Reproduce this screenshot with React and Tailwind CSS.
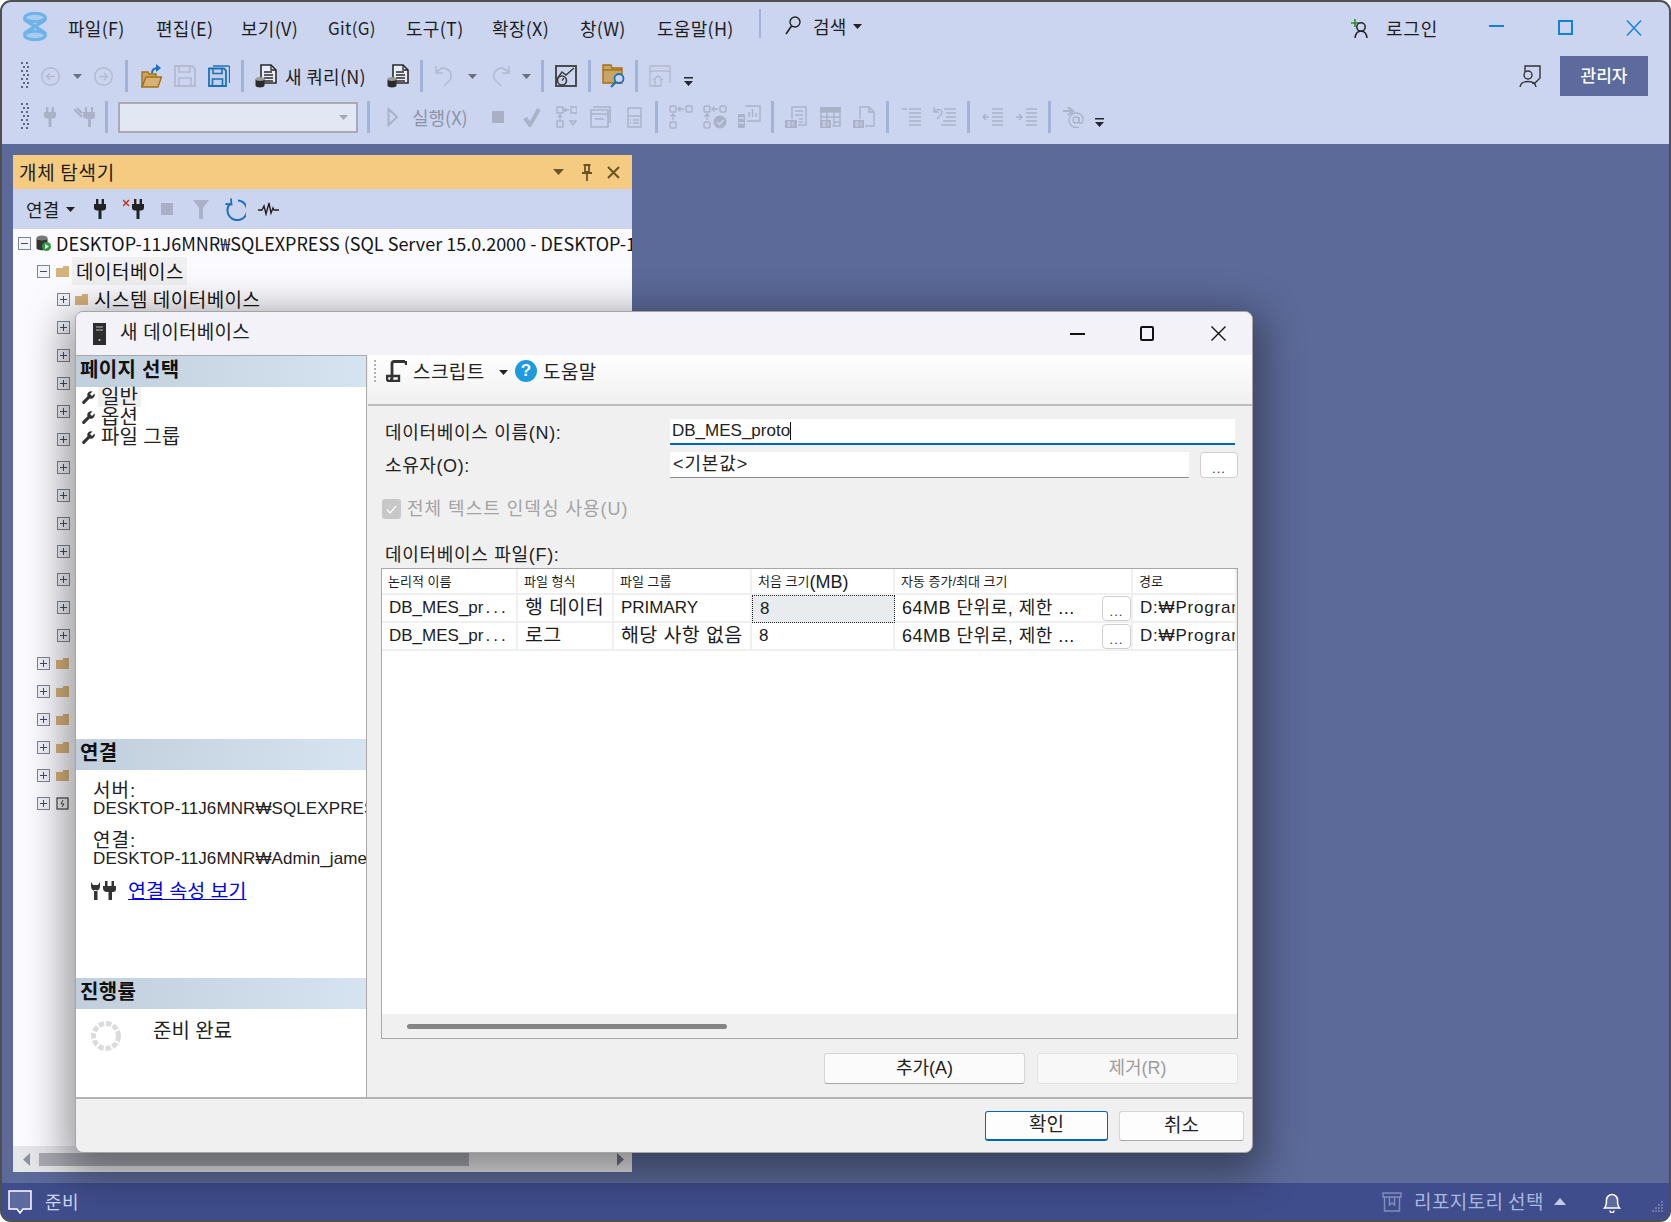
import React from "react";

const G = "#aab2c8";
const Ic = ({ w, h, className = "", children }) => (
  <svg width={w} height={h} viewBox={`0 0 ${w} ${h}`} fill="none" className={`shrink-0 ${className}`}>
    {children}
  </svg>
);
const Sep = ({ className = "" }) => <div className={`w-[3px] h-[32px] shrink-0 bg-[#a3b3d8] ${className}`} />;
const Grip = ({ className = "" }) => (
  <Ic w={8} h={28} className={className}>
    {[0, 4, 8, 12, 16, 20, 24].map((y) => (
      <g key={y} fill="#5f6680">
        <rect x={y % 8 === 0 ? 0 : 2} y={y} width="2" height="2" />
        <rect x={y % 8 === 0 ? 5 : 6} y={y} width="2" height="2" />
      </g>
    ))}
  </Ic>
);
const Arrow = ({ className = "", color = "#6b7080" }) => (
  <Ic w={9} h={5} className={className}><path d="M0 0h9L4.5 5z" fill={color} /></Ic>
);
const Overflow = ({ className = "" }) => (
  <Ic w={9} h={9} className={className}><path d="M0 0h9v1.5H0zM0 4h9L4.5 9z" fill="#22262f" /></Ic>
);
const Circ = ({ dir, className = "" }) => (
  <Ic w={19} h={19} className={className}>
    <circle cx="9.5" cy="9.5" r="8.7" stroke="#b3bace" strokeWidth="1.4" />
    {dir === "l" ? (
      <path d="M14 9.5H5.5M9 6l-3.5 3.5L9 13" stroke="#b3bace" strokeWidth="1.3" />
    ) : (
      <path d="M5 9.5h8.5M10 6l3.5 3.5L10 13" stroke="#b3bace" strokeWidth="1.3" />
    )}
  </Ic>
);
const Floppy = ({ color, className = "", all }) => (
  <Ic w={22} h={22} className={className}>
    {all && <path d="M5 1h15a1.5 1.5 0 0 1 1.5 1.5V18" stroke={color} strokeWidth="1.3" />}
    <path d={all ? "M1 3.5h15l2 2V21H1z" : "M1 1h17l3 3v17H1z"} stroke={color} strokeWidth="1.8" fill={all ? "#c3d0ea" : "none"} />
    <path d={all ? "M5 3.5v5h9v-5M4.5 21v-7h10v7" : "M5 1v6h11V1M5 21v-8h12v8"} stroke={color} strokeWidth="1.6" />
  </Ic>
);
const Query = ({ className = "" }) => (
  <Ic w={22} h={24} className={className}>
    <path d="M6 1h10l5 5v13H6z" fill="#e8ecf6" stroke="#2a2a2a" strokeWidth="1.6" />
    <path d="M16 1v5h5M9 8h8M9 11h9M9 14h9M9 17h9" stroke="#2a2a2a" strokeWidth="1.3" />
    <ellipse cx="5" cy="15" rx="4.5" ry="2" fill="#9a9a9a" />
    <path d="M.5 15v6.5c0 2.6 9 2.6 9 0V15c0 2.6-9 2.6-9 0z" fill="#2a2a2a" />
  </Ic>
);
const Plug = ({ color, className = "" }) => (
  <Ic w={12} h={20} className={className}>
    <path d="M2 0h2.4v5H2zM7.6 0H10v5H7.6zM0 5h12v3.5a3 3 0 0 1-3 3H7.5V20h-3v-8.500H3a3 3 0 0 1-3-3z" fill={color} />
  </Ic>
);
const Wrench = ({ className = "" }) => (
  <Ic w={13} h={13} className={className}>
    <path d="M12.500 2.500 10 5 8 3l2.500-2.500a3.800 3.800 0 0 0-5 4.800L.6 10.200a1.500 1.500 0 0 0 2.200 2.200l4.900-4.900a3.800 3.800 0 0 0 4.800-5z" fill="#333" />
  </Ic>
);
const Expander = ({ open, className = "" }) => (
  <div className={`w-[13px] h-[13px] shrink-0 border border-[#7d8496] bg-[#f2f3f8] relative ${className}`}>
    <div className="absolute left-[2px] right-[2px] top-[5px] h-px bg-[#3d4a70]" />
    {!open && <div className="absolute top-[2px] bottom-[2px] left-[5px] w-px bg-[#3d4a70]" />}
  </div>
);
const Folder = ({ className = "" }) => (
  <Ic w={13} h={11} className={className}><path d="M0 2h7V0h6v11H0z" fill="#d6b27c" /></Ic>
);

const Menu = () => (
  <div className="h-[54px] pb-[2px] flex items-center text-[18px] tracking-[0.3px] text-[#1e1e1e]">
    <Ic w={24} h={29} className="ml-[21px] mr-[21px] mb-[3px]">
      <ellipse cx="12" cy="5.500" rx="10.300" ry="4.200" stroke="#6db3ea" strokeWidth="3" fill="#a9cdef" />
      <ellipse cx="12" cy="23.500" rx="10.300" ry="4.200" stroke="#6db3ea" strokeWidth="3" fill="#a9cdef" />
      <path d="M2 8 22 21M22 8 2 21M2 6v3M22 6v3M2 20v3M22 20v3" stroke="#6db3ea" strokeWidth="3.400" />
    </Ic>
    <div className="w-[88px] whitespace-nowrap">파일(F)</div>
    <div className="w-[85px] whitespace-nowrap">편집(E)</div>
    <div className="w-[87px] whitespace-nowrap">보기(V)</div>
    <div className="w-[78px] whitespace-nowrap text-[17px]">Git(G)</div>
    <div className="w-[86px] whitespace-nowrap">도구(T)</div>
    <div className="w-[88px] whitespace-nowrap">확장(X)</div>
    <div className="w-[77px] whitespace-nowrap">창(W)</div>
    <div className="w-[102px] whitespace-nowrap">도움말(H)</div>
    <div className="w-[2px] h-[29px] bg-[#a3b3d8] mb-[9px]" />
    <Ic w={16} h={20} className="ml-[24px] mb-[4px]">
      <circle cx="10" cy="6" r="5" stroke="#222" strokeWidth="1.400" />
      <path d="M6.500 10 1 18" stroke="#222" strokeWidth="1.600" />
    </Ic>
    <div className="ml-[12px] whitespace-nowrap mb-[4px]">검색</div>
    <Arrow className="ml-[6px] mb-[4px]" color="#222" />
    <div className="ml-auto flex items-center">
      <Ic w={20} h={20}>
        <path d="M1 5h8M5 1v8" stroke="#2e8b2e" strokeWidth="1.600" />
        <circle cx="11" cy="9" r="4.200" stroke="#222" strokeWidth="1.500" />
        <path d="M5 20c.5-4 2.500-7 6-7s5.500 3 6 7" stroke="#222" strokeWidth="1.500" />
      </Ic>
      <div className="ml-[16px] w-[53px] whitespace-nowrap tracking-[0.8px]">로그인</div>
      <div className="ml-[50px] w-[15px] h-[2px] bg-[#0f82da] mb-[5px]" />
      <div className="ml-[54px] w-[15px] h-[15px] border-2 border-[#0f82da] mb-[1px]" />
      <Ic w={16} h={16} className="ml-[53px] mb-[1px]">
        <path d="M1 .5 15 15.500M15 .5 1 15.500" stroke="#0f82da" strokeWidth="1.400" />
      </Ic>
      <div className="w-[27px]" />
    </div>
  </div>
);

const Row1 = () => (
  <div className="h-[40px] flex items-center text-[#1e1e1e]">
    <Grip className="ml-[19px]" />
    <Circ dir="l" className="ml-[12px]" />
    <Arrow className="ml-[13px]" />
    <Circ dir="r" className="ml-[12px]" />
    <Sep className="ml-[12px]" />
    <Ic w={21} h={24} className="ml-[13px]">
      <path d="M1 8h6l1 2h7v4H5l-4 9z" fill="#c9a468" stroke="#a8700f" strokeWidth="1.400" />
      <path d="M1 23 5 13h15.500L17 23z" fill="#d4b27a" stroke="#a8700f" strokeWidth="1.400" />
      <path d="M11 9c0-3 2-5 6-5" stroke="#1c6fb8" strokeWidth="2" />
      <path d="M15 0l5 4-5 4z" fill="#1c6fb8" />
    </Ic>
    <Floppy color="#b3bace" className="ml-[12px]" />
    <Floppy color="#1c71b8" all className="ml-[12px]" />
    <Sep className="ml-[11px]" />
    <Query className="ml-[11px]" />
    <div className="ml-[8px] w-[82px] text-[18px] tracking-[0.3px] whitespace-nowrap">새 쿼리(N)</div>
    <Query className="ml-[20px]" />
    <Sep className="ml-[11px]" />
    <Ic w={20} h={22} className="ml-[12px]">
      <path d="M1 1v7h7M1 8c3-4 7-6 11-4 5 3 6 9 1 13l-4 4" stroke="#b3bace" strokeWidth="1.500" />
    </Ic>
    <Arrow className="ml-[13px]" />
    <Ic w={20} h={22} className="ml-[13px]">
      <path d="M19 1v7h-7M19 8c-3-4-7-6-11-4-5 3-6 9-1 13l4 4" stroke="#b3bace" strokeWidth="1.500" />
    </Ic>
    <Arrow className="ml-[12px]" />
    <Sep className="ml-[10px]" />
    <Ic w={22} h={22} className="ml-[11px]">
      <rect x="1" y="1" width="20" height="20" stroke="#3c3c3c" strokeWidth="1.800" />
      <path d="M2 14 7 7l4 3 8-7" stroke="#3c3c3c" strokeWidth="1.500" />
      <circle cx="7" cy="15.500" r="4.500" fill="#ccd5f0" stroke="#3c3c3c" strokeWidth="1.600" />
      <path d="M7 15.500 9 13" stroke="#3c3c3c" strokeWidth="1.300" />
    </Ic>
    <Sep className="ml-[11px]" />
    <Ic w={24} h={24} className="ml-[11px]">
      <path d="M1 1h8l1 3h10v15H1z" fill="#c9a468" stroke="#a8700f" strokeWidth="1.400" />
      <path d="M1 6h19" stroke="#a8700f" strokeWidth="1.400" />
      <circle cx="17" cy="14.500" r="4.500" fill="#ccd5f0" stroke="#1c6fb8" strokeWidth="1.800" />
      <path d="M14 18l-5 5" stroke="#1c6fb8" strokeWidth="2" />
    </Ic>
    <Sep className="ml-[9px]" />
    <Ic w={22} h={22} className="ml-[11px]">
      <path d="M11 21H1V1h20v17M1 6h20" stroke="#b3bace" strokeWidth="1.400" />
      <path d="M4 15l5-4 5 4M6 14v7h6v-7" stroke="#b3bace" strokeWidth="1.400" />
    </Ic>
    <Overflow className="ml-[13px] mt-[11px]" />
    <div className="ml-auto flex items-center">
      <Ic w={22} h={22}>
        <path d="M6 7V1h15v12l-5 5h-3" stroke="#333" strokeWidth="1.400" />
        <circle cx="9" cy="10" r="4" stroke="#333" strokeWidth="1.400" fill="#ccd5f0" />
        <path d="M1 22c.5-3.500 3-5.500 8-5.500S16.500 18.500 17 22" stroke="#333" strokeWidth="1.400" />
      </Ic>
      <div className="ml-[19px] mr-[21px] w-[88px] h-[40px] bg-[#5c6a9e] text-white text-[17px] font-medium flex items-center justify-center pb-[2px]">관리자</div>
    </div>
  </div>
);

const GBox = ({ children, w, h, className }) => <Ic w={w} h={h} className={className}>{children}</Ic>;

const Row2 = () => (
  <div className="mt-px h-[40px] flex items-center text-[#8b92a8]">
    <Grip className="ml-[19px]" />
    <Plug color={G} className="ml-[15px]" />
    <GBox w={21} h={20} className="ml-[18px]">
      <path d="M0 2 8 10M3 1l5 5" stroke={G} strokeWidth="2.400" />
      <path d="M11 0h2v5h-2zM17 0h2v5h-2zM9 5h12v4a3 3 0 0 1-3 3h-1v8h-3v-8h-1a4 4 0 0 1-4-4z" fill={G} />
    </GBox>
    <Sep className="ml-[10px]" />
    <div className="ml-[10px] w-[240px] h-[31px] bg-[#e1e7f3] border-2 border-[#a9abb0] flex items-center justify-end pr-[8px]">
      <Arrow color="#a3a8b5" />
    </div>
    <Sep className="ml-[9px]" />
    <GBox w={11} h={20} className="ml-[17px]"><path d="M1.500 2 10 10l-8.500 8z" stroke={G} strokeWidth="2" /></GBox>
    <div className="ml-[14px] w-[55px] text-[18px] whitespace-nowrap">실행(X)</div>
    <div className="ml-[25px] w-[12px] h-[12px] bg-[#a9b0c6] shrink-0" />
    <GBox w={18} h={19} className="ml-[19px]"><path d="M2 10l5 7L16 1" stroke={G} strokeWidth="4" /></GBox>
    <GBox w={21} h={22} className="ml-[15px]">
      <path d="M1 1h6v6H1zM15 1h6v6h-6zM1 15h6v6H1zM13 4H8M10 2 8 4l2 2M4 9v5M2 11l2-2 2 2M14 15h6l-3 4z" stroke={G} strokeWidth="1.300" />
    </GBox>
    <GBox w={21} h={22} className="ml-[13px]">
      <path d="M3 1h17v16M1 4h17v17H1zM1 8h17M5 13h9" stroke={G} strokeWidth="1.600" />
    </GBox>
    <GBox w={15} h={21} className="ml-[16px]">
      <path d="M1 1h13v19H1zM1 9h13M6 13h6M6 16h6M3 13h1M3 16h1" stroke={G} strokeWidth="1.400" />
    </GBox>
    <Sep className="ml-[13px]" />
    <GBox w={24} h={24} className="ml-[11px]">
      <rect x="1" y="1" width="6" height="6" rx="1.500" stroke={G} strokeWidth="1.500" />
      <rect x="17" y="1" width="6" height="6" rx="1.500" stroke={G} strokeWidth="1.500" />
      <rect x="1" y="17" width="6" height="6" rx="1.500" stroke={G} strokeWidth="1.500" />
      <path d="M15 4H9M11.500 1.500 9 4l2.500 2.500M4 15V9M1.500 11.500 4 9l2.500 2.500" stroke={G} strokeWidth="1.300" />
    </GBox>
    <GBox w={24} h={24} className="ml-[10px]">
      <rect x="1" y="1" width="6" height="6" rx="1.500" stroke={G} strokeWidth="1.500" />
      <rect x="17" y="1" width="6" height="6" rx="1.500" stroke={G} strokeWidth="1.500" />
      <rect x="1" y="17" width="6" height="6" rx="1.500" stroke={G} strokeWidth="1.500" />
      <path d="M15 4H9M11.500 1.500 9 4l2.500 2.500M4 15V9M1.500 11.500 4 9l2.500 2.500" stroke={G} strokeWidth="1.300" />
      <circle cx="17" cy="17" r="6.500" fill={G} />
      <path d="M14 17l2.500 2.500L20.500 15" stroke="#ccd5f0" strokeWidth="1.500" />
    </GBox>
    <GBox w={24} h={24} className="ml-[10px]">
      <path d="M8 1h15v15H10" stroke={G} strokeWidth="1.400" />
      <path d="M12 12V7M15.500 12V4M19 12V8" stroke={G} strokeWidth="1.400" />
      <rect x="1" y="9" width="7" height="14" rx="1" fill={G} />
      <path d="M2 13h5M2 18h5" stroke="#ccd5f0" strokeWidth="1.300" />
    </GBox>
    <Sep className="ml-[10px]" />
    <GBox w={22} h={22} className="ml-[11px]">
      <path d="M7 13V1h14v18h-8M10 5h8M10 9h8M14 13h4M14 16h4" stroke={G} strokeWidth="1.400" />
      <rect x="0" y="14" width="12" height="8" fill={G} />
      <path d="M3 16h2v4H3zM8 16v4" stroke="#ccd5f0" strokeWidth="1" />
    </GBox>
    <GBox w={21} h={22} className="ml-[13px]">
      <rect x="0" y="1" width="21" height="5" fill={G} />
      <path d="M1 6h19v14h-8M1 11h19M1 6v8M7 6v8M14 6v14M14 16h6" stroke={G} strokeWidth="1.400" />
      <rect x="0" y="14" width="11" height="8" fill={G} />
      <path d="M3 16h2v4H3zM8 16v4" stroke="#ccd5f0" strokeWidth="1" />
    </GBox>
    <GBox w={22} h={22} className="ml-[12px]">
      <path d="M7 13V1h9l5 5v14h-9M16 1v5h5" stroke={G} strokeWidth="1.400" />
      <rect x="0" y="14" width="11" height="8" fill={G} />
      <path d="M3 16h2v4H3zM8 16v4" stroke="#ccd5f0" strokeWidth="1" />
    </GBox>
    <Sep className="ml-[11px]" />
    <GBox w={19} h={19} className="ml-[13px]">
      <path d="M0 1h5M7 1h12M7 5h12M7 9h12M7 13h12M7 17h12" stroke={G} strokeWidth="1.400" />
    </GBox>
    <GBox w={23} h={22} className="ml-[12px]">
      <path d="M11 3h12M13 7h10M13 11h10M10 15h13M8 19h15" stroke={G} strokeWidth="1.400" />
      <path d="M1 1v5h5M1 6c3-4 7-3 8 0 0 3-3 4-5 7" stroke={G} strokeWidth="1.400" />
    </GBox>
    <Sep className="ml-[11px]" />
    <GBox w={21} h={19} className="ml-[12px]">
      <path d="M7 9H1M4 6 1 9l3 3M10 1h11M10 5h11M10 9h11M10 13h11M10 17h11" stroke={G} strokeWidth="1.400" />
    </GBox>
    <GBox w={22} h={19} className="ml-[12px]">
      <path d="M1 9h6M4 6l3 3-3 3M11 1h11M11 5h11M11 9h11M11 13h11M11 17h11" stroke={G} strokeWidth="1.400" />
    </GBox>
    <Sep className="ml-[11px]" />
    <GBox w={21} h={22} className="ml-[12px]">
      <path d="M0 5h8M5 1l5 4-5 4" stroke={G} strokeWidth="2" />
      <circle cx="13" cy="14" r="3" stroke={G} strokeWidth="1.300" />
      <path d="M16 11v5c0 2 4 2 4-2 0-4.500-3-7-7-7s-7 3-7 7 3 7.500 7 7.500h3" stroke={G} strokeWidth="1.300" />
    </GBox>
    <Overflow className="ml-[11px] mt-[11px]" />
  </div>
);

const TreeRow = ({ level, label, kind = "folder", hl, open }) => {
  const pad = level === 1 ? "pl-[24px]" : "pl-[44px]";
  const gap = level === 1 ? "ml-[6px]" : "ml-[5px]";
  return (
    <div className={`h-[28px] flex items-center text-[19px] tracking-[0.5px] text-[#151515] whitespace-nowrap ${pad}`}>
      <Expander open={open} />
      {kind === "folder" && <Folder className={gap} />}
      {kind === "special" && (
        <Ic w={13} h={13} className="ml-[6px]">
          <rect x="1" y="1" width="11" height="11" fill="#eee" stroke="#444" strokeWidth="1.200" />
          <path d="M7 3 5 7h3l-2 3" stroke="#444" strokeWidth="1" />
        </Ic>
      )}
      {label && (
        <div className={hl ? "ml-[3px] pl-[4px] pr-[3px] h-[28px] flex items-center bg-[#f0f0f0]" : "ml-[6px]"}>{label}</div>
      )}
    </div>
  );
};

const Panel = () => (
  <div className="ml-[11px] mt-[11px] mb-[11px] w-[619px] flex flex-col bg-[#fbfbff] overflow-hidden">
    <div className="h-[34px] bg-[#f5cb82] flex items-center pl-[6px] text-[19px] tracking-[0.7px] text-[#1e1e1e] shrink-0">
      <div className="whitespace-nowrap">개체 탐색기</div>
      <Ic w={11} h={6} className="ml-auto"><path d="M0 0h11L5.500 6z" fill="#6b5324" /></Ic>
      <Ic w={10} h={17} className="ml-[18px]">
        <path d="M1.500 1h7M3 1v7h4V1M0 9h10M5 9v8" stroke="#6b5324" strokeWidth="1.800" />
      </Ic>
      <Ic w={13} h={13} className="ml-[15px] mr-[12px]"><path d="M1 1l11 11M12 1 1 12" stroke="#6b5324" strokeWidth="2" /></Ic>
    </div>
    <div className="h-[40px] bg-[#ccd5f0] flex items-center shrink-0">
      <div className="ml-[13px] w-[36px] text-[18px] tracking-[0.3px] text-[#1e1e1e] whitespace-nowrap">연결</div>
      <Arrow className="ml-[4px]" color="#222" />
      <Plug color="#222" className="ml-[19px]" />
      <Ic w={21} h={20} className="ml-[17px]">
        <path d="M0 1l6 6M6 1 0 7" stroke="#c4331b" strokeWidth="1.500" />
        <path d="M11 0h2.400v5H11zM16.600 0H19v5h-2.400zM9 5h12v3.500a3 3 0 0 1-3 3h-1.500V20h-3v-8.500H12a3 3 0 0 1-3-3z" fill="#222" />
      </Ic>
      <div className="ml-[17px] w-[12px] h-[12px] bg-[#a9b0c6]" />
      <Ic w={16} h={21} className="ml-[20px]"><path d="M0 1h16L10 9v11H6V9z" fill={G} /></Ic>
      <Ic w={22} h={24} className="ml-[15px]">
        <path d="M6.500 6.200a9.800 9.800 0 1 0 7.500-2.700" stroke="#1c71b8" strokeWidth="2" />
        <path d="M7 1.500 7.500 7.500 1.500 7" stroke="#1c71b8" strokeWidth="1.800" />
      </Ic>
      <Ic w={21} h={14} className="ml-[12px]">
        <path d="M0 8h4l2-4 2 8 3-11 2 10 2-5 1 2h5" stroke="#222" strokeWidth="1.400" />
      </Ic>
    </div>
    <div className="flex-1 min-h-0">
      <div className="h-[28px] flex items-center pl-[5px] text-[18px] text-[#151515] whitespace-nowrap overflow-hidden">
        <Expander open />
        <Ic w={15} h={16} className="ml-[5px]">
          <ellipse cx="6" cy="3" rx="5.500" ry="2.500" fill="#777" />
          <path d="M.5 3v10c0 3 11 3 11 0V3c0 3-11 3-11 0z" fill="#333" />
          <circle cx="10.500" cy="11.500" r="4.500" fill="#2b9a3a" />
          <path d="M9 9l4 2.500L9 14z" fill="#fff" />
        </Ic>
        <div className="ml-[5px]">DESKTOP-11J6MNR₩SQLEXPRESS (SQL Server 15.0.2000 - DESKTOP-11J6MNR₩Admin_james)</div>
      </div>
      <TreeRow level={1} label="데이터베이스" hl open />
      <TreeRow level={2} label="시스템 데이터베이스" />
      {Array.from({ length: 12 }).map((_, i) => <TreeRow key={i} level={2} />)}
      {Array.from({ length: 5 }).map((_, i) => <TreeRow key={i} level={1} />)}
      <TreeRow level={1} kind="special" />
    </div>
    <div className="h-[26px] bg-[#e6e6ea] flex items-center shrink-0">
      <Ic w={7} h={13} className="ml-[10px]"><path d="M7 0v13L0 6.500z" fill="#8d93a6" /></Ic>
      <div className="ml-[9px] w-[430px] h-[13px] bg-[#a8a9b2]" />
      <Ic w={7} h={13} className="ml-auto mr-[8px]"><path d="M0 0v13l7-6.500z" fill="#70758a" /></Ic>
    </div>
  </div>
);

const SideHead = ({ children }) => (
  <div className="h-[31px] bg-gradient-to-r from-[#c1cfdd] to-[#d6e3f1] pl-[4px] pb-[4px] flex items-center text-[20px] tracking-[0.3px] font-bold text-[#111] shrink-0">
    {children}
  </div>
);

const Side = () => (
  <div className="w-[291px] shrink-0 bg-white border-t border-r border-[#a8a8a8] flex flex-col font-['Liberation_Sans','Noto_Sans_CJK_KR',sans-serif] text-[#222] overflow-hidden">
    <SideHead>페이지 선택</SideHead>
    <div className="h-[352px] pl-[6px] shrink-0 text-[20px] leading-[20px]">
      <div className="h-[20px] flex items-center">
        <Wrench />
        <div className="ml-[3px] px-[3px] bg-[#f0f0f0] h-[20px]">일반</div>
      </div>
      <div className="h-[20px] flex items-center"><Wrench /><div className="ml-[6px]">옵션</div></div>
      <div className="h-[20px] flex items-center"><Wrench /><div className="ml-[6px]">파일 그룹</div></div>
    </div>
    <SideHead>연결</SideHead>
    <div className="h-[208px] pl-[17px] pt-[12px] shrink-0 text-[17px] leading-[18px] whitespace-nowrap overflow-hidden">
      <div className="text-[19px] tracking-[1px]">서버:</div>
      <div className="tracking-[0.1px]">DESKTOP-11J6MNR₩SQLEXPRESS</div>
      <div className="mt-[14px] text-[19px] tracking-[1px]">연결:</div>
      <div className="tracking-[0.1px]">DESKTOP-11J6MNR₩Admin_james</div>
      <div className="mt-[13px] flex items-center -ml-[2px]">
        <Ic w={25} h={19}>
          <path d="M0 1v4.500a4.500 4.500 0 0 0 9 0V1L7 4H2zM3 9h3.500v10H3z" fill="#333" />
          <path d="M14 0h2.500v5H14zM20.500 0H23v5h-2.500zM12 5h13v3a3 3 0 0 1-3 3h-1v8h-3.500v-8H16a4 4 0 0 1-4-4z" fill="#333" />
        </Ic>
        <a className="ml-[12px] text-[19.500px] text-[#0000ee] underline">연결 속성 보기</a>
      </div>
    </div>
    <SideHead>진행률</SideHead>
    <div className="flex-1 flex items-start pl-[15px] pt-[12px]">
      <Ic w={30} h={30}>
        <circle cx="15" cy="15" r="12.500" stroke="#dcdcdc" strokeWidth="5" strokeDasharray="5.500 1.800" />
      </Ic>
      <div className="ml-[32px] text-[20px] leading-[20px] whitespace-nowrap">준비 완료</div>
    </div>
  </div>
);

const SmallBtn = ({ className = "" }) => (
  <div className={`bg-white border border-[#cfcfcf] rounded-[4px] flex items-end justify-center pb-[3px] text-[13px] leading-[10px] tracking-[1px] text-[#333] shrink-0 ${className}`}>...</div>
);

const Cell = ({ children, className = "" }) => (
  <div className={`h-[28px] border-r-2 border-b-2 border-[#f0f0f0] flex items-center pl-[7px] whitespace-nowrap overflow-hidden ${className}`}>{children}</div>
);
const HCell = ({ children, className = "" }) => (
  <div className={`h-[26px] border-r-2 border-b-2 border-[#f0f0f0] flex items-center pl-[6px] pt-[2px] text-[13px] whitespace-nowrap overflow-hidden ${className}`}>{children}</div>
);
const LogicalName = () => <>DB_MES_pr<span className="ml-[2px] tracking-[3px]">...</span></>;
const Growth = () => <span className="text-[18px] tracking-[0.5px]">64MB 단위로, 제한 ...</span>;

const FileGrid = () => (
  <div className="ml-[13px] mt-[5px] w-[857px] h-[471px] border border-[#a8a8a8] bg-white flex flex-col text-[#1c1c1c] overflow-hidden">
    <div className="flex-1 min-h-0">
      <div className="grid grid-cols-[136px_96px_138px_143px_238px_104px] text-[17px]">
        <HCell>논리적 이름</HCell>
        <HCell>파일 형식</HCell>
        <HCell>파일 그룹</HCell>
        <HCell>처음 크기<span className="text-[18px] leading-none">(MB)</span></HCell>
        <HCell>자동 증가/최대 크기</HCell>
        <HCell className="border-r-0">경로</HCell>

        <Cell><LogicalName /></Cell>
        <Cell className="text-[19.500px] tracking-[0.4px]">행 데이터</Cell>
        <Cell>PRIMARY</Cell>
        <div className="h-[28px] border border-dotted border-[#222] bg-[#e8ecef] flex items-center pl-[7px]">8</div>
        <Cell className="relative">
          <Growth />
          <SmallBtn className="absolute right-0 top-px w-[29px] h-[25px]" />
        </Cell>
        <Cell className="border-r-0 tracking-[0.8px]">D:₩Program Files</Cell>

        <Cell><LogicalName /></Cell>
        <Cell className="text-[19.500px] tracking-[0.4px]">로그</Cell>
        <Cell className="text-[19.500px] tracking-[0.4px]">해당 사항 없음</Cell>
        <Cell>8</Cell>
        <Cell className="relative">
          <Growth />
          <SmallBtn className="absolute right-0 top-px w-[29px] h-[25px]" />
        </Cell>
        <Cell className="border-r-0 tracking-[0.8px]">D:₩Program Files</Cell>
      </div>
    </div>
    <div className="h-[24px] bg-[#f0f0f0] flex items-center pl-[25px] shrink-0">
      <div className="w-[320px] h-[5px] rounded-full bg-[#858585]" />
    </div>
  </div>
);

const Dialog = () => (
  <div className="absolute left-[75px] top-[311px] w-[1178px] h-[842px] rounded-[8px] border border-[#a5a5a5] bg-[#f0f0f0] shadow-[0_12px_40px_10px_#00000066] flex flex-col overflow-hidden font-['Liberation_Sans','Noto_Sans_CJK_KR',sans-serif] text-[#222] text-[18px]">
    <div className="h-[43px] bg-[#f3f2f8] flex items-center shrink-0 pl-[17px]">
      <Ic w={13} h={22}>
        <rect width="13" height="22" fill="#2d2d2d" />
        <path d="M3 4h7M3 7h7" stroke="#bbb" strokeWidth="1.200" />
        <circle cx="6.500" cy="17" r="1" fill="#ccc" />
      </Ic>
      <div className="ml-[14px] text-[19px] tracking-[0.3px] whitespace-nowrap">새 데이터베이스</div>
      <div className="ml-auto w-[15px] h-[2px] bg-[#111]" />
      <div className="ml-[55px] w-[14px] h-[15px] border-2 border-[#111] rounded-[2px]" />
      <Ic w={15} h={15} className="ml-[57px] mr-[26px]"><path d="M.5.5l14 14M14.500.5l-14 14" stroke="#111" strokeWidth="1.400" /></Ic>
    </div>
    <div className="flex-1 min-h-0 flex">
      <Side />
      <div className="flex-1 flex flex-col min-w-0 ml-px">
        <div className="h-[51px] border-b-2 border-[#bcbcbc] bg-gradient-to-b from-white to-[#f0f0f0] flex items-start pt-[5px] shrink-0">
          <Ic w={2} h={22} className="ml-[6px]"><path d="M1 0v22" stroke="#999" strokeWidth="1.500" strokeDasharray="2 2" /></Ic>
          <Ic w={21} h={22} className="ml-[10px]">
            <path d="M19 1.500H8a2 2 0 0 0-2 2V18a2 2 0 0 1-2 2" stroke="#333" strokeWidth="2.800" />
            <path d="M20 1v4M1 16h12v5H3a2 2 0 0 1-2-2z" stroke="#333" strokeWidth="2.400" />
          </Ic>
          <div className="ml-[6px] w-[72px] text-[19px] tracking-[0.4px] leading-[26px] whitespace-nowrap">스크립트</div>
          <Arrow className="ml-[14px] mt-[10px]" color="#222" />
          <div className="ml-[7px] w-[22px] h-[22px] rounded-full bg-[#1d9ae0] text-white font-bold text-[17px] leading-[22px] text-center">?</div>
          <div className="ml-[6px] text-[19px] tracking-[0.4px] leading-[26px] whitespace-nowrap">도움말</div>
        </div>
        <div className="mt-[13px] ml-[17px] h-[26px] flex items-center">
          <div className="w-[285px] pt-[2px] tracking-[0.7px] whitespace-nowrap">데이터베이스 이름(N):</div>
          <div className="w-[565px] h-[26px] bg-white border-b-2 border-[#0067c0] flex items-center pl-[2px] text-[17px] text-[#222]">
            DB_MES_proto<div className="w-px h-[18px] bg-[#111]" />
          </div>
        </div>
        <div className="mt-[7px] ml-[17px] h-[26px] flex items-center">
          <div className="w-[285px] pt-[2px] tracking-[0.6px] whitespace-nowrap">소유자(O):</div>
          <div className="w-[519px] h-[26px] bg-white border-b border-[#8a8a8a] flex items-center pl-[3px] tracking-[0.9px]">&lt;기본값&gt;</div>
          <SmallBtn className="ml-[11px] w-[38px] h-[26px]" />
        </div>
        <div className="mt-[21px] ml-[14px] h-[20px] flex items-center text-[#a3a3a3]">
          <div className="w-[19px] h-[20px] rounded-[3px] bg-[#c8c8c8] flex items-center justify-center">
            <Ic w={11} h={9}><path d="M1 4.500 4 8l6-7" stroke="#fff" strokeWidth="1.200" /></Ic>
          </div>
          <div className="ml-[6px] tracking-[1px] whitespace-nowrap">전체 텍스트 인덱싱 사용(U)</div>
        </div>
        <div className="mt-[24px] ml-[17px] h-[20px] pt-[2px] leading-[20px] tracking-[0.7px] whitespace-nowrap">데이터베이스 파일(F):</div>
        <FileGrid />
        <div className="mt-[14px] flex justify-end gap-[12px] mr-[14px]">
          <div className="w-[201px] h-[31px] bg-[#fbfbfb] border border-[#d4d4d4] border-b-[#a8a8a8] rounded-[3px] flex items-center justify-center">추가(A)</div>
          <div className="w-[201px] h-[31px] bg-[#f8f8f8] border border-[#e2e2e2] rounded-[3px] flex items-center justify-center text-[#9d9d9d]">제거(R)</div>
        </div>
      </div>
    </div>
    <div className="h-[55px] border-t-2 border-[#b4b4b4] flex items-start justify-end gap-[11px] pt-[12px] pr-[8px] text-[19px] shrink-0">
      <div className="w-[123px] h-[30px] bg-[#fdfdfd] border border-[#0067c0] border-b-2 rounded-[3px] flex items-center justify-center">확인</div>
      <div className="w-[125px] h-[30px] bg-[#fdfdfd] border border-[#d4d4d4] border-b-[#a8a8a8] rounded-[3px] flex items-center justify-center">취소</div>
    </div>
  </div>
);

const Status = () => (
  <div className="h-[37px] bg-[#3f4d8c] flex items-center text-[#cfd6ee] text-[18px] shrink-0">
    <Ic w={24} h={24} className="ml-[6px]">
      <path d="M1 1h22v18h-8l-3 4-3-4H1z" stroke="#fff" strokeWidth="1.500" fill="#5c6a9e" />
    </Ic>
    <div className="ml-[13px] tracking-[0.4px] whitespace-nowrap">준비</div>
    <div className="ml-auto flex items-center">
      <Ic w={20} h={20}>
        <path d="M1 1h18v4H1zM2.500 5v14h15V5M7.500 5v8l2.500-2 2.500 2V5" stroke="#7f8cbc" strokeWidth="1.500" />
      </Ic>
      <div className="ml-[12px] w-[130px] text-[19px] tracking-[0.4px] whitespace-nowrap text-[#a9b6de]">리포지토리 선택</div>
      <Ic w={12} h={7} className="ml-[10px]"><path d="M6 0l6 7H0z" fill="#c4cbe6" /></Ic>
      <Ic w={18} h={22} className="ml-[37px]">
        <path d="M1.500 17c2-2 2-5 2-8a5.500 5.500 0 0 1 11 0c0 3 0 6 2 8z" stroke="#fff" strokeWidth="1.500" fill="#5c6a9e" />
        <path d="M7 19.500a2 2 0 0 0 4 0" stroke="#fff" strokeWidth="1.500" />
      </Ic>
      <Ic w={14} h={14} className="ml-[30px] mr-[4px] mt-[10px]">
        {[[10, 1], [10, 4], [7, 4], [10, 7], [7, 7], [4, 7], [10, 10], [7, 10], [4, 10], [1, 10]].map(([x, y]) => (
          <rect key={`${x}-${y}`} x={x} y={y} width="2" height="2" fill="#6d78a6" />
        ))}
      </Ic>
    </div>
  </div>
);

export default function App() {
  return (
    <div className="relative w-[1671px] h-[1222px] bg-white overflow-hidden font-['Noto_Sans_CJK_KR','Noto_Sans',sans-serif]">
      <div className="w-full h-full border-2 border-[#4f4f4f] rounded-[11px] overflow-hidden flex flex-col bg-[#5c6a99]">
        <div className="h-[142px] bg-[#ccd5f0] shrink-0">
          <Menu />
          <Row1 />
          <Row2 />
        </div>
        <div className="flex-1 min-h-0 flex">
          <Panel />
        </div>
        <Status />
      </div>
      <Dialog />
    </div>
  );
}
